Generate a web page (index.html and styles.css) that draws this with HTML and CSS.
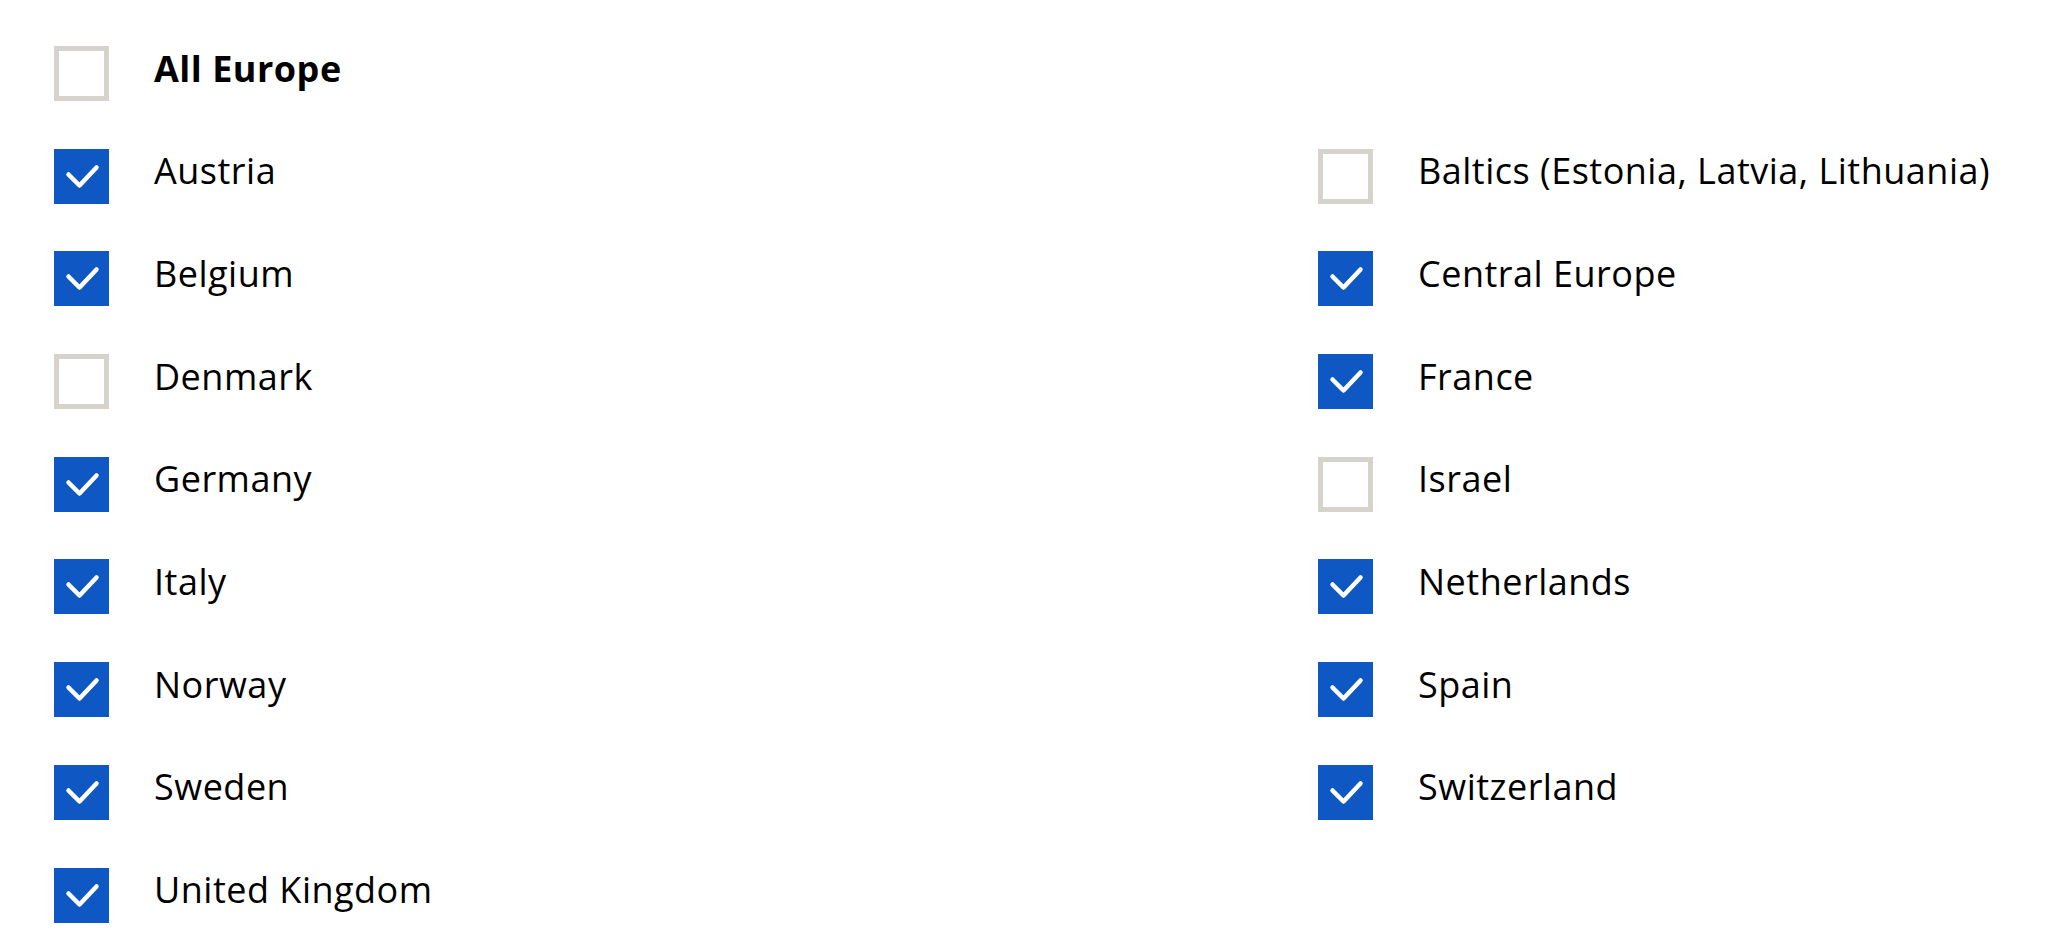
FILE: index.html
```html
<!DOCTYPE html>
<html lang="en">
<head>
  <meta charset="UTF-8">
  <title>Regions</title>
  <link rel="stylesheet" href="styles.css">
</head>
<body>
  <form class="regions">
    <label class="opt opt-all">
      <input type="checkbox" name="all">
      <span class="box"></span>
      <span class="name">All Europe</span>
    </label>

    <div class="cols">
      <div class="col">
        <label class="opt"><input type="checkbox" checked><span class="box"></span><span class="name">Austria</span></label>
        <label class="opt"><input type="checkbox" checked><span class="box"></span><span class="name">Belgium</span></label>
        <label class="opt"><input type="checkbox"><span class="box"></span><span class="name">Denmark</span></label>
        <label class="opt"><input type="checkbox" checked><span class="box"></span><span class="name">Germany</span></label>
        <label class="opt"><input type="checkbox" checked><span class="box"></span><span class="name">Italy</span></label>
        <label class="opt"><input type="checkbox" checked><span class="box"></span><span class="name">Norway</span></label>
        <label class="opt"><input type="checkbox" checked><span class="box"></span><span class="name">Sweden</span></label>
        <label class="opt"><input type="checkbox" checked><span class="box"></span><span class="name">United Kingdom</span></label>
      </div>
      <div class="col">
        <label class="opt"><input type="checkbox"><span class="box"></span><span class="name">Baltics (Estonia, Latvia, Lithuania)</span></label>
        <label class="opt"><input type="checkbox" checked><span class="box"></span><span class="name">Central Europe</span></label>
        <label class="opt"><input type="checkbox" checked><span class="box"></span><span class="name">France</span></label>
        <label class="opt"><input type="checkbox"><span class="box"></span><span class="name">Israel</span></label>
        <label class="opt"><input type="checkbox" checked><span class="box"></span><span class="name">Netherlands</span></label>
        <label class="opt"><input type="checkbox" checked><span class="box"></span><span class="name">Spain</span></label>
        <label class="opt"><input type="checkbox" checked><span class="box"></span><span class="name">Switzerland</span></label>
      </div>
    </div>
  </form>
</body>
</html>
```
FILE: styles.css
```css
body {
  margin: 0;
  padding: 46px 0 0 54px;
  font-family: "Open Sans", Lato, sans-serif;
  color: #000;
  background: #fff;
}
.regions {
  display: flex;
  flex-direction: column;
  gap: 47.7px;
}
.cols {
  display: grid;
  grid-template-columns: 1264px 1fr;
}
.col {
  display: flex;
  flex-direction: column;
  gap: 47.7px;
}
.opt {
  display: flex;
  align-items: center;
  height: 55px;
  cursor: pointer;
}
.opt input {
  display: none;
}
.box {
  flex: none;
  width: 55px;
  height: 55px;
  box-sizing: border-box;
  border: 5px solid #d6d2cc;
  background: #fff;
  margin-right: 45px;
}
.opt input:checked + .box {
  border: none;
  background-color: #0f57c2;
  background-image: url("data:image/svg+xml,%3Csvg xmlns='http://www.w3.org/2000/svg' viewBox='0 0 55 55'%3E%3Cpath d='M14.5 25.5 L25.5 36.5 L42.5 18.5' fill='none' stroke='%23fff' stroke-width='4.5' stroke-linecap='round' stroke-linejoin='round'/%3E%3C/svg%3E");
}
.name {
  font-size: 36px;
  line-height: 1;
  letter-spacing: 0.5px;
  margin-top: -10px;
}
.opt-all .name {
  font-weight: 700;
}
```
